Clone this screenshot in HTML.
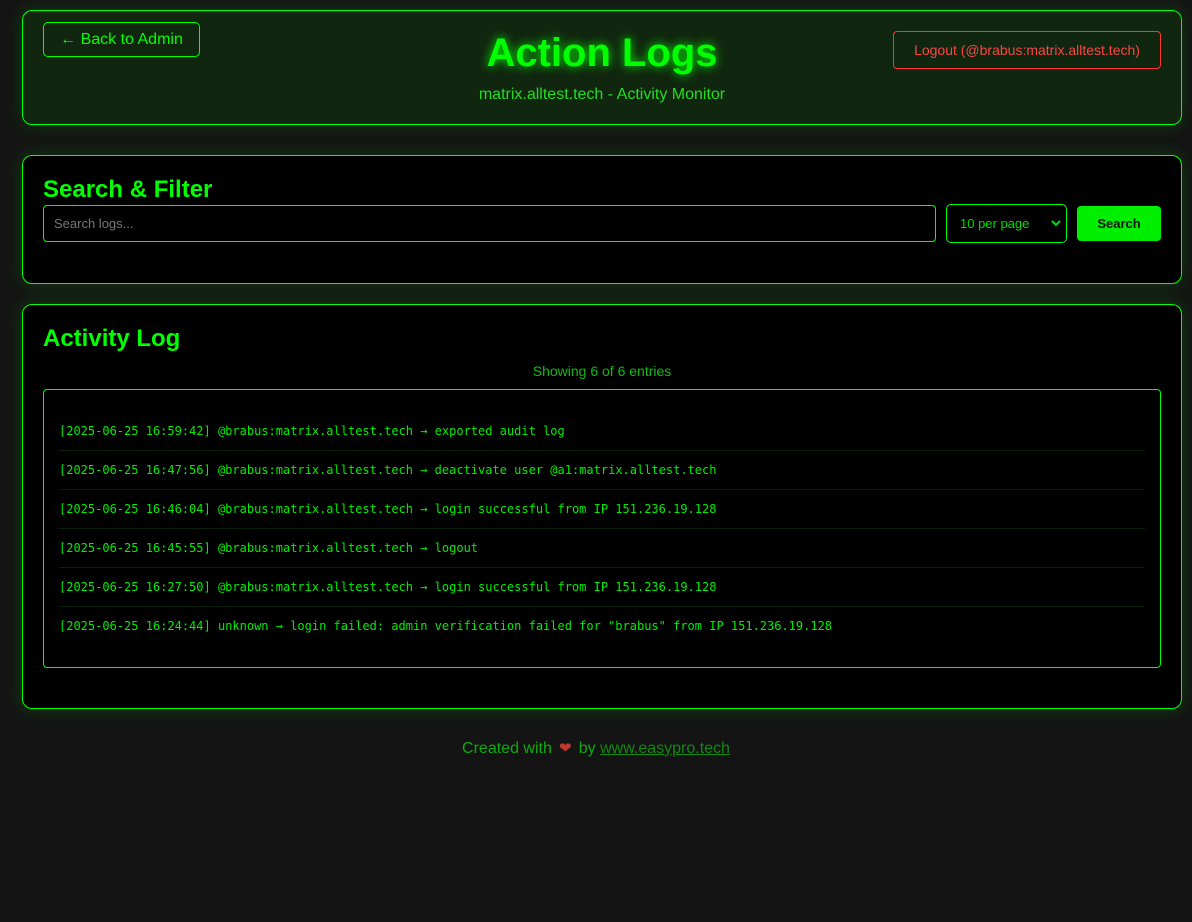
<!DOCTYPE html>
<html><head><meta charset="utf-8"><style>
*{box-sizing:border-box;margin:0;padding:0}
body{width:1192px;height:922px;background:#141414;font-family:"Liberation Sans",sans-serif;color:#00ff00;position:relative;overflow:hidden}
.card{position:absolute;left:22px;width:1160px;border:1px solid #00ff00;border-radius:10px;box-shadow:0 0 18px rgba(0,255,0,0.18)}
.hdr{top:10px;height:115px;background:#11260f}
.btn1{position:absolute;left:20px;top:11px;width:157px;height:35px;border:1px solid #00ff00;border-radius:5px;font-size:16px;line-height:33px;text-align:center;color:#00ff00}
.title{position:absolute;left:0;right:0;top:20px;text-align:center;font-size:40px;font-weight:bold;text-shadow:0 0 10px #00ff00}
.sub{position:absolute;left:0;right:0;top:75px;text-align:center;font-size:16px;color:#22dd22}
.logout{position:absolute;right:20px;top:20px;width:268px;height:38px;border:1px solid #ff3333;border-radius:4px;color:#ff4444;font-size:14px;line-height:36px;text-align:center}
.sf{top:155px;height:129px;background:#000}
h2{position:absolute;left:20px;font-size:24px;font-weight:bold;color:#00ff00}
.inp{position:absolute;left:20px;top:49px;width:893px;height:37px;border:1px solid #00ff00;border-radius:4px;font-size:13px;color:#777;padding-left:10px;line-height:35px}
.sel{position:absolute;left:923px;top:48px;width:121px;height:39px;border:1px solid #00ff00;border-radius:5px;font-size:13px;color:#00dd00;padding-left:13px;line-height:37px}
.sel svg{position:absolute;right:5px;top:14px}
.sbtn{position:absolute;left:1054px;top:50px;width:84px;height:35px;background:#00ee00;border-radius:4px;color:#111;font-size:13px;font-weight:bold;text-align:center;line-height:35px}
.al{top:304px;height:405px;background:#000}
.show{position:absolute;left:0;right:0;top:58px;text-align:center;font-size:14px;color:#11bb11}
.box{position:absolute;left:20px;top:84px;width:1118px;height:279px;border:1px solid #00ff00;border-radius:4px;padding:22px 15px 18px}
.e{font-family:"DejaVu Sans Mono","Liberation Mono",monospace;font-size:12px;line-height:22px;padding:8px 0;border-bottom:1px solid #0a1f0a;color:#00ee00}
.e:last-child{border-bottom:none}
.foot{position:absolute;left:0;right:0;top:739px;text-align:center;font-size:16px;color:#11aa11}
.foot a{color:#118811;text-decoration:underline}
.heart{display:inline-block;width:18px;font-size:15px;color:#c0392b}
</style></head><body>
<div class="card hdr">
<div class="btn1">← Back to Admin</div>
<div class="title">Action Logs</div>
<div class="sub">matrix.alltest.tech - Activity Monitor</div>
<div class="logout">Logout (@brabus:matrix.alltest.tech)</div>
</div>
<div class="card sf">
<h2 style="top:20px">Search &amp; Filter</h2>
<div class="inp">Search logs...</div>
<div class="sel">10 per page<svg width="10" height="8" viewBox="0 0 10 8"><path d="M1 2l4 4 4-4" stroke="#00dd00" stroke-width="2" fill="none"/></svg></div>
<div class="sbtn">Search</div>
</div>
<div class="card al">
<h2 style="top:20px">Activity Log</h2>
<div class="show">Showing 6 of 6 entries</div>
<div class="box">
<div class="e">[2025-06-25 16:59:42] @brabus:matrix.alltest.tech → exported audit log</div>
<div class="e">[2025-06-25 16:47:56] @brabus:matrix.alltest.tech → deactivate user @a1:matrix.alltest.tech</div>
<div class="e">[2025-06-25 16:46:04] @brabus:matrix.alltest.tech → login successful from IP 151.236.19.128</div>
<div class="e">[2025-06-25 16:45:55] @brabus:matrix.alltest.tech → logout</div>
<div class="e">[2025-06-25 16:27:50] @brabus:matrix.alltest.tech → login successful from IP 151.236.19.128</div>
<div class="e">[2025-06-25 16:24:44] unknown → login failed: admin verification failed for "brabus" from IP 151.236.19.128</div>
</div>
</div>
<div class="foot">Created with <span class="heart">❤</span> by <a>www.easypro.tech</a></div>
</body></html>
